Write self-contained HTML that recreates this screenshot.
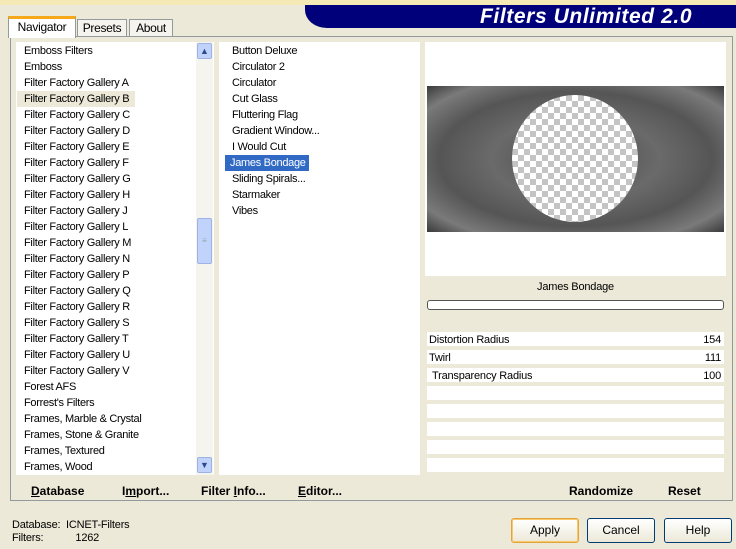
<!DOCTYPE html>
<html><head><meta charset="utf-8"><style>
*{margin:0;padding:0;box-sizing:border-box}
body{width:736px;height:549px;background:#ECE9D8;position:relative;overflow:hidden;font-family:"Liberation Sans",sans-serif;font-size:11px;color:#000}
.a{position:absolute}
.row{height:16px;line-height:16px;padding-left:7px;white-space:nowrap;letter-spacing:-0.3px}
.b{font-weight:bold;font-size:12px}
.btn{position:absolute;top:518px;height:25px;width:68px;border:1px solid #003c74;border-radius:3px;background:linear-gradient(#fff,#ece9d8);text-align:center;line-height:23px;font-size:12px}
.prow{position:absolute;left:427px;width:297px;height:16px;background:#fff;border-bottom:2px solid #ECE9D8;line-height:16px;font-size:11px;letter-spacing:-0.2px}
</style></head><body>
<div class="a" style="left:0;top:0;width:736px;height:5px;background:#f5e9b5"></div>
<div class="a" style="left:305px;top:5px;width:431px;height:23px;background:#00007a;border-bottom-left-radius:22px 18px"></div>
<div class="a" style="left:480px;top:4px;width:256px;height:25px;line-height:25px;color:#fff;font-weight:bold;font-style:italic;font-size:21px;letter-spacing:0.6px">Filters Unlimited 2.0</div>
<div class="a" style="left:10px;top:36px;width:723px;height:465px;border:1px solid #919b9c;background:#ECE9D8"></div>
<div class="a" style="left:8px;top:16px;width:68px;height:22px;background:#fff;border:1px solid #919b9c;border-bottom:none;border-top:3px solid #f6a81b;text-align:center;line-height:17px;font-size:12px;letter-spacing:-0.3px">Navigator</div>
<div class="a" style="left:77px;top:19px;width:50px;height:18px;background:#f4f3ee;border:1px solid #919b9c;text-align:center;line-height:16px;font-size:12px;letter-spacing:-0.3px">Presets</div>
<div class="a" style="left:129px;top:19px;width:44px;height:18px;background:#f4f3ee;border:1px solid #919b9c;text-align:center;line-height:16px;font-size:12px;letter-spacing:-0.3px">About</div>
<div class="a" style="left:16px;top:42px;width:198px;height:433px;background:#fff"></div>
<div class="a" style="left:17px;top:43px;width:180px">
<div class="row">Emboss Filters</div><div class="row">Emboss</div><div class="row">Filter Factory Gallery A</div>
<div class="row" style="background:#ECE9D8;width:118px">Filter Factory Gallery B</div>
<div class="row">Filter Factory Gallery C</div><div class="row">Filter Factory Gallery D</div><div class="row">Filter Factory Gallery E</div><div class="row">Filter Factory Gallery F</div><div class="row">Filter Factory Gallery G</div><div class="row">Filter Factory Gallery H</div><div class="row">Filter Factory Gallery J</div><div class="row">Filter Factory Gallery L</div><div class="row">Filter Factory Gallery M</div><div class="row">Filter Factory Gallery N</div><div class="row">Filter Factory Gallery P</div><div class="row">Filter Factory Gallery Q</div><div class="row">Filter Factory Gallery R</div><div class="row">Filter Factory Gallery S</div><div class="row">Filter Factory Gallery T</div><div class="row">Filter Factory Gallery U</div><div class="row">Filter Factory Gallery V</div><div class="row">Forest AFS</div><div class="row">Forrest's Filters</div><div class="row">Frames, Marble &amp; Crystal</div><div class="row">Frames, Stone &amp; Granite</div><div class="row">Frames, Textured</div><div class="row">Frames, Wood</div>
</div>
<div class="a" style="left:196px;top:42px;width:17px;height:433px;background:#f5f4ee"></div>
<div class="a" style="left:197px;top:43px;width:15px;height:16px;background:#c1d3fb;border:1px solid #9db3e6;border-radius:2px;text-align:center;font-size:9px;line-height:14px;color:#2c4a8c">&#9650;</div>
<div class="a" style="left:197px;top:218px;width:15px;height:46px;background:#c1d3fb;border:1px solid #9db3e6;border-radius:2px;text-align:center;line-height:44px;font-size:8px;color:#8aa">&#8801;</div>
<div class="a" style="left:197px;top:457px;width:15px;height:16px;background:#c1d3fb;border:1px solid #9db3e6;border-radius:2px;text-align:center;font-size:9px;line-height:14px;color:#2c4a8c">&#9660;</div>
<div class="a" style="left:219px;top:42px;width:201px;height:433px;background:#fff"></div>
<div class="a" style="left:225px;top:43px;width:190px">
<div class="row">Button Deluxe</div><div class="row">Circulator 2</div><div class="row">Circulator</div><div class="row">Cut Glass</div><div class="row">Fluttering Flag</div><div class="row">Gradient Window...</div><div class="row">I Would Cut</div>
<div class="row" style="background:#316ac5;color:#fff;width:84px;padding-left:5px">James Bondage</div>
<div class="row">Sliding Spirals...</div><div class="row">Starmaker</div><div class="row">Vibes</div>
</div>
<div class="a" style="left:425px;top:42px;width:301px;height:234px;background:#fff"></div>
<div class="a" style="left:427px;top:86px;width:297px;height:146px;background:radial-gradient(ellipse at 50% 50%,#4a4a4a 0%,#6a6a6a 40%,#555 65%,#7a7a7a 85%,#3a3a3a 100%)"></div>
<div class="a" style="left:512px;top:95px;width:126px;height:127px;border-radius:50%;background-color:#fff;background-image:linear-gradient(45deg,#c4c4c4 25%,transparent 25%,transparent 75%,#c4c4c4 75%),linear-gradient(45deg,#c4c4c4 25%,transparent 25%,transparent 75%,#c4c4c4 75%);background-size:12px 12px;background-position:0 0,6px 6px"></div>
<div class="a" style="left:427px;top:281px;width:297px;text-align:center;font-size:11px;letter-spacing:-0.2px">James Bondage</div>
<div class="a" style="left:427px;top:300px;width:297px;height:10px;border:1px solid #555;border-radius:3px;background:#fff"></div>
<div class="prow" style="top:332px"><span style="padding-left:2px">Distortion Radius</span><span style="float:right;padding-right:3px">154</span></div>
<div class="prow" style="top:350px"><span style="padding-left:2px">Twirl</span><span style="float:right;padding-right:3px">111</span></div>
<div class="prow" style="top:368px"><span style="padding-left:5px">Transparency Radius</span><span style="float:right;padding-right:3px">100</span></div>
<div class="prow" style="top:386px"></div><div class="prow" style="top:404px"></div><div class="prow" style="top:422px"></div><div class="prow" style="top:440px"></div><div class="prow" style="top:458px;height:16px"></div>
<div class="a b" style="left:31px;top:484px"><u>D</u>atabase</div>
<div class="a b" style="left:122px;top:484px">I<u>m</u>port...</div>
<div class="a b" style="left:201px;top:484px">Filter <u>I</u>nfo...</div>
<div class="a b" style="left:298px;top:484px"><u>E</u>ditor...</div>
<div class="a b" style="left:569px;top:484px">Randomize</div>
<div class="a b" style="left:668px;top:484px">Reset</div>
<div class="a" style="left:12px;top:519px;line-height:13px;letter-spacing:-0.2px">Database:&nbsp;&nbsp;ICNET-Filters<br>Filters:<span style="padding-left:32px">1262</span></div>
<div class="btn" style="left:511px;border-color:#e5a43a;box-shadow:inset 0 0 0 1px #f8c86a">Apply</div>
<div class="btn" style="left:587px">Cancel</div>
<div class="btn" style="left:664px">Help</div>
</body></html>
